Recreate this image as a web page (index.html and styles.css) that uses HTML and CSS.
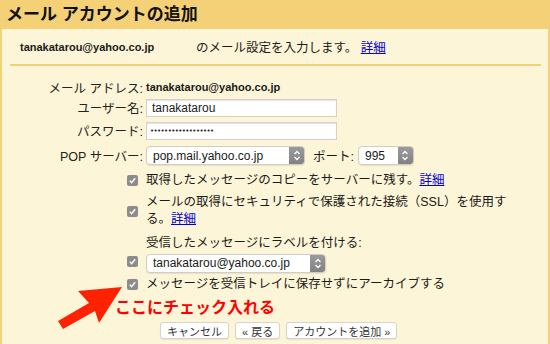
FILE: index.html
```html
<!DOCTYPE html>
<html lang="ja">
<head>
    <meta charset="UTF-8">
    <meta name="viewport" content="width=device-width, initial-scale=1.0">
    <title>メール アカウントの追加</title>
    <link rel="stylesheet" href="styles.css">
</head>
<body>
    <div class="header">
        <h1>メール アカウントの追加</h1>
    </div>

    <div class="panel">
        <div class="intro">
            <span class="intro-mail">tanakatarou@yahoo.co.jp</span>
            <span>のメール設定を入力します。 <a href="#">詳細</a></span>
        </div>
        <div class="rule"></div>

        <div class="form">
            <div class="row row-mail">
                <div class="label">メール アドレス:</div>
                <div class="value">tanakatarou@yahoo.co.jp</div>
            </div>
            <div class="row row-user">
                <div class="label">ユーザー名:</div>
                <div class="field">tanakatarou</div>
            </div>
            <div class="row row-pass">
                <div class="label">パスワード:</div>
                <div class="field field-pass">••••••••••••••••••</div>
            </div>
            <div class="row row-pop">
                <div class="label">POP サーバー:</div>
                <div class="select select-pop">
                    <span>pop.mail.yahoo.co.jp</span>
                    <span class="stepper"><svg width="8" height="11" viewBox="0 0 8 11"><path d="M1.5 4 L4 1.5 L6.5 4 M1.5 7 L4 9.5 L6.5 7" fill="none" stroke="#fff" stroke-width="1.3"/></svg></span>
                </div>
                <span class="port-label">ポート:</span>
                <div class="select select-port">
                    <span>995</span>
                    <span class="stepper"><svg width="8" height="11" viewBox="0 0 8 11"><path d="M1.5 4 L4 1.5 L6.5 4 M1.5 7 L4 9.5 L6.5 7" fill="none" stroke="#fff" stroke-width="1.3"/></svg></span>
                </div>
            </div>

            <div class="opt opt-leave">
                <span class="check"><svg width="11" height="11" viewBox="0 0 11 11"><path d="M2.8 5.6 L4.6 7.6 L8.2 3.2" fill="none" stroke="#fff" stroke-width="1.4"/></svg></span>
                <div class="opt-text">取得したメッセージのコピーをサーバーに残す。<a href="#">詳細</a></div>
            </div>
            <div class="opt opt-ssl">
                <span class="check"><svg width="11" height="11" viewBox="0 0 11 11"><path d="M2.8 5.6 L4.6 7.6 L8.2 3.2" fill="none" stroke="#fff" stroke-width="1.4"/></svg></span>
                <div class="opt-text">メールの取得にセキュリティで保護された接続（SSL）を使用す<br>る。<a href="#">詳細</a></div>
            </div>
            <div class="opt opt-label">
                <span class="check"><svg width="11" height="11" viewBox="0 0 11 11"><path d="M2.8 5.6 L4.6 7.6 L8.2 3.2" fill="none" stroke="#fff" stroke-width="1.4"/></svg></span>
                <div class="opt-text">
                    <div>受信したメッセージにラベルを付ける:</div>
                    <div class="select select-label">
                        <span>tanakatarou@yahoo.co.jp</span>
                        <span class="stepper"><svg width="8" height="11" viewBox="0 0 8 11"><path d="M1.5 4 L4 1.5 L6.5 4 M1.5 7 L4 9.5 L6.5 7" fill="none" stroke="#fff" stroke-width="1.3"/></svg></span>
                    </div>
                </div>
            </div>
            <div class="opt opt-archive">
                <span class="check"><svg width="11" height="11" viewBox="0 0 11 11"><path d="M2.8 5.6 L4.6 7.6 L8.2 3.2" fill="none" stroke="#fff" stroke-width="1.4"/></svg></span>
                <div class="opt-text">メッセージを受信トレイに保存せずにアーカイブする</div>
            </div>

            <div class="note">ここにチェック入れる</div>

            <div class="buttons">
                <button class="btn">キャンセル</button>
                <button class="btn">« 戻る</button>
                <button class="btn">アカウントを追加 »</button>
            </div>
        </div>

        <!-- red arrow pointing at the archive checkbox -->
        <svg class="arrow" width="550" height="344" viewBox="0 0 550 344">
            <polygon points="122,287 78,291 89,303 58,321 63,329 95,311 99,323" fill="#ff2200"/>
        </svg>
    </div>
</body>
</html>
```

FILE: styles.css
```css
* { margin: 0; padding: 0; box-sizing: border-box; }
body {
    font-family: "Liberation Sans", "Noto Sans CJK JP", sans-serif;
    font-size: 12.5px;
    color: #1a1a1a;
    background: #fdf5d7;
    width: 550px;
    height: 344px;
    overflow: hidden;
}
a { color: #0000dd; }
.header {
    background: #f4d077;
    height: 29px;
    padding-left: 6px;
}
.header h1 {
    font-size: 17px;
    line-height: 29px;
    font-weight: bold;
    color: #111;
}
.panel {
    background: #fdf5d7;
    border-left: 2px solid #f4d077;
    border-right: 2px solid #f4d077;
    height: 315px;
}
.intro {
    display: flex;
    align-items: center;
    height: 35px;
    padding-left: 18px;
}
.intro-mail {
    width: 176px;
    font-size: 11px;
    font-weight: bold;
}
.rule {
    height: 2px;
    background: #f4cf74;
    margin: 0 7px 0 8px;
}
.form { padding-top: 11px; }
.row { display: flex; align-items: center; }
.row-mail { height: 20px; }
.row-user { height: 21px; }
.row-pass { height: 25px; }
.row-pop { height: 25px; }
.label {
    width: 144px;
    padding-right: 3px;
    text-align: right;
    color: #222;
}
.value { font-size: 11px; font-weight: bold; }
.field {
    width: 191px;
    height: 18px;
    background: #fff;
    border: 1px solid #d4d2c8;
    box-shadow: inset 0 1px 1px rgba(0,0,0,0.12);
    padding-left: 5px;
    font-size: 12px;
    line-height: 16px;
}
.field-pass {
    font-family: "DejaVu Sans", sans-serif;
    font-size: 7px;
    letter-spacing: -0.6px;
    padding-left: 3px;
}
.select {
    display: flex;
    align-items: center;
    justify-content: space-between;
    height: 19px;
    background: #fff;
    border: 1px solid #cfcdc4;
    border-radius: 4px;
    box-shadow: 0 1px 1px rgba(0,0,0,0.08);
    padding-left: 6px;
    font-size: 12px;
    overflow: hidden;
}
.stepper {
    display: flex;
    align-items: center;
    justify-content: center;
    align-self: stretch;
    width: 15px;
    background: linear-gradient(#9a9a9a, #828282);
}
.select-pop { width: 159px; }
.select-port { width: 56px; }
.select-label { width: 180px; margin-top: 2px; }
.port-label { margin: 0 4px 0 8px; }
.opt {
    display: flex;
    align-items: center;
    padding-left: 125px;
}
.check {
    display: flex;
    width: 11px;
    height: 11px;
    border-radius: 2px;
    background: #8c8c8c;
    margin-right: 8px;
    flex-shrink: 0;
}
.opt-text { line-height: 17px; }
.opt-leave { height: 24px; }
.opt-ssl { height: 38px; }
.opt-label {
    height: 42px;
    align-items: flex-start;
    padding-top: 5px;
}
.opt-label .check { margin-top: 21px; }
.opt-archive { height: 24px; }
.note {
    height: 24px;
    line-height: 24px;
    padding-left: 113px;
    font-size: 16px;
    font-weight: bold;
    color: #ff0000;
}
.buttons {
    display: flex;
    gap: 6px;
    padding-left: 158px;
    margin-top: 2px;
}
.btn {
    font-family: "Liberation Sans", "Noto Sans CJK JP", sans-serif;
    font-size: 11px;
    color: #333;
    height: 17px;
    padding: 0 6px;
    background: #fff;
    border: 1px solid #d6d4cc;
    border-radius: 3px;
    box-shadow: 0 1px 1px rgba(0,0,0,0.08);
}
.arrow {
    position: absolute;
    top: 0;
    left: 0;
    pointer-events: none;
}
```
